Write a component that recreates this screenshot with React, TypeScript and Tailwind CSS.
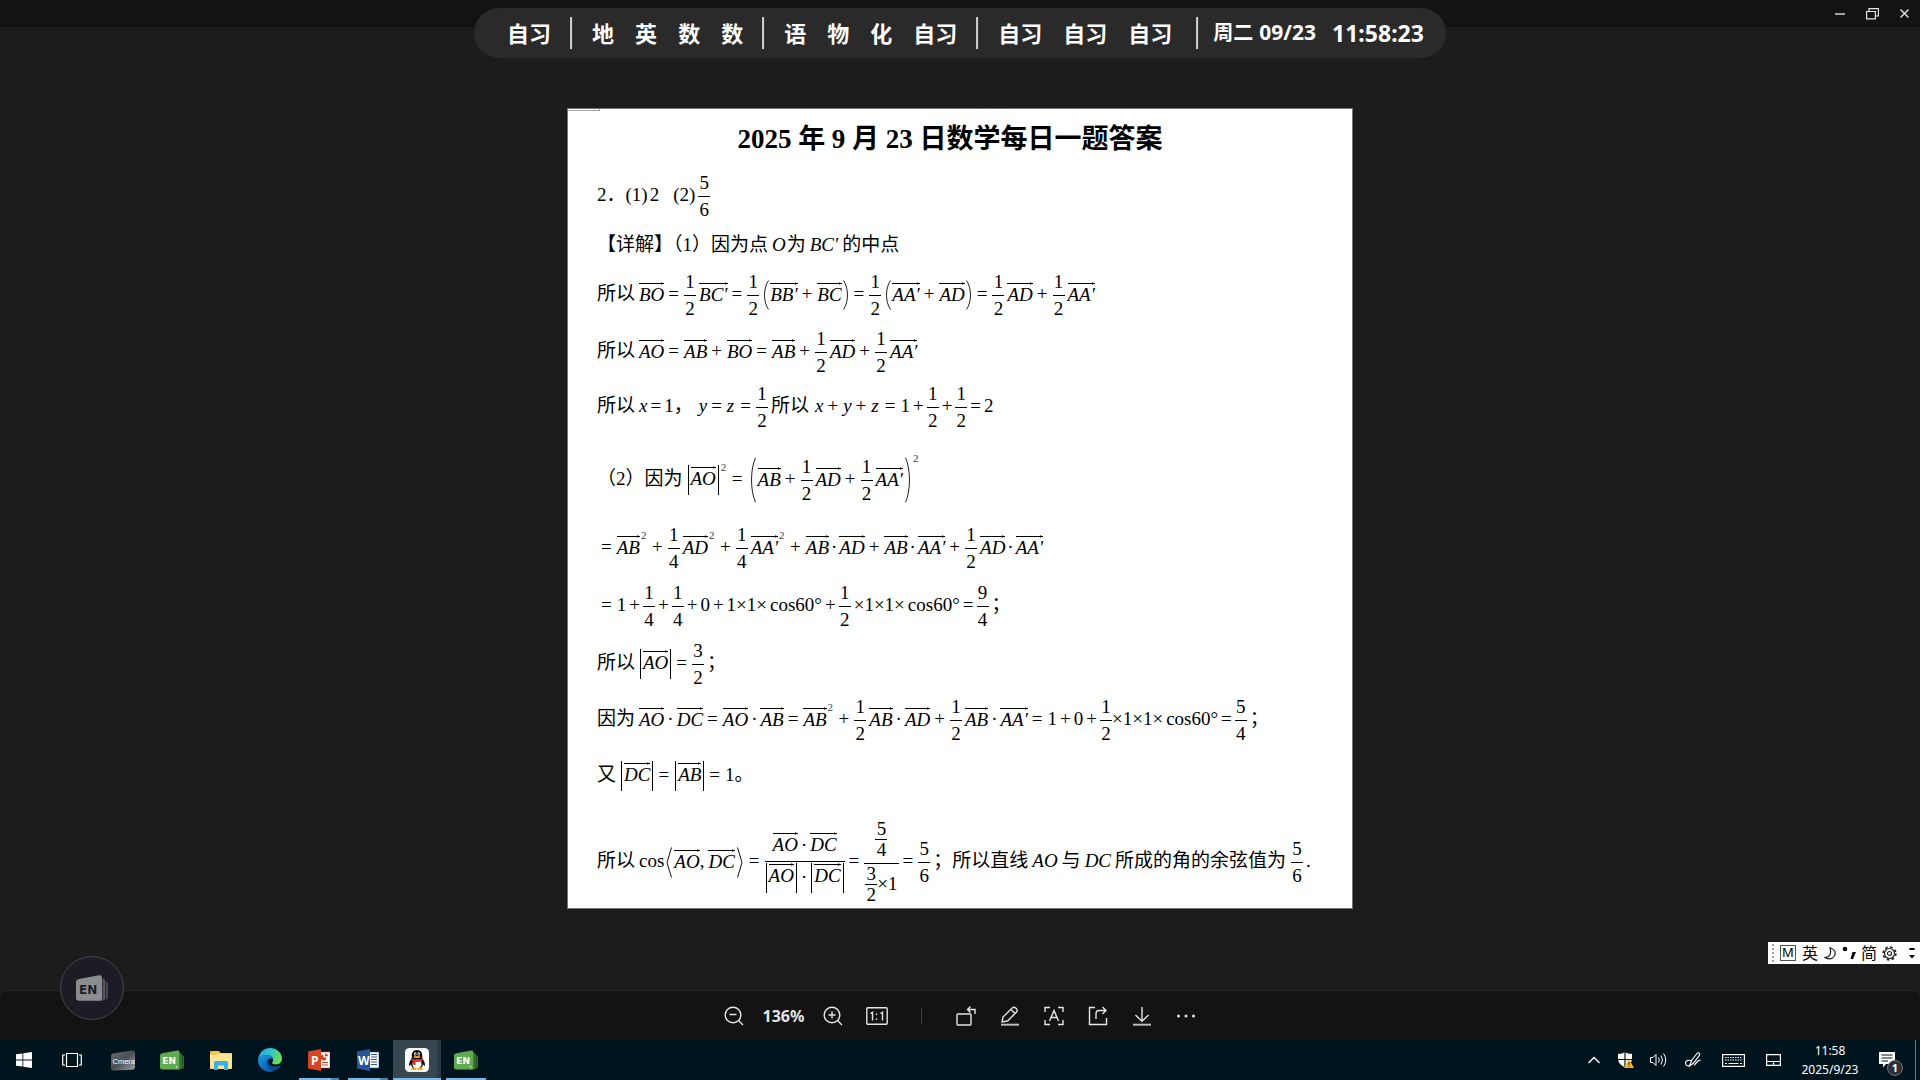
import React, { type ReactNode } from "react";

const SERIF = "font-['Liberation_Serif','Noto_Sans_CJK_SC',serif]";
const UI = "font-['Noto_Sans','Noto_Sans_CJK_SC',sans-serif]";

/* ---------- math building blocks ---------- */

function T({ children, className = "" }: { children: ReactNode; className?: string }) {
  return <span className={`whitespace-pre pb-[2px] leading-5 ${className}`}>{children}</span>;
}

function Vec({ children }: { children: string }) {
  return (
    <span className="relative mb-[3px] border-t border-black pt-px leading-5">
      <i>{children}</i>
      <svg className="absolute -top-[3px] right-0 h-[5px] w-[5px]" viewBox="0 0 5 5">
        <path d="M2 1.2 L5 2.5 L2 3.8 Z" fill="#000" />
      </svg>
    </span>
  );
}

function V({ children, className = "" }: { children: string; className?: string }) {
  return <i className={`pb-[2px] leading-5 ${className}`}>{children}</i>;
}

function Op({ children }: { children: string }) {
  return <span className="ml-1 mr-[5px] pb-[2px] leading-5">{children}</span>;
}

/* operator between plain numbers, set closer than between vectors */
function NOp({ children }: { children: string }) {
  return <span className="mx-[3px] pb-[2px] leading-5">{children}</span>;
}

function Frac({ n, d, nested = false, gap = true }: { n: string; d: string; nested?: boolean; gap?: boolean }) {
  return (
    <span className={`flex w-3 flex-col items-center leading-5 ${gap ? "mr-[3px]" : ""}`}>
      <span className={nested ? "" : "pb-[3px]"}>{n}</span>
      <span className="h-px w-full bg-black" />
      <span className={nested ? "" : "pt-[3px]"}>{d}</span>
    </span>
  );
}

function Dot({ className = "mx-[3px]" }: { className?: string }) {
  return <span className={`pb-[2px] leading-5 ${className}`}>·</span>;
}

function Sup() {
  return <span className="-mt-[26px] ml-px w-[7px] text-[11px] leading-3 text-neutral-700">2</span>;
}

function Abs({ children }: { children: ReactNode }) {
  return <span className="mx-px flex h-[30px] items-center border-x border-black px-[2px] pb-[2px]">{children}</span>;
}

function Paren({ side, tall = false }: { side: "l" | "r"; tall?: boolean }) {
  return (
    <svg
      className={`w-[6px] ${tall ? "mx-[2px] h-[46px]" : "mx-px h-[30px]"} ${side === "r" ? "-scale-x-100" : ""}`}
      viewBox="0 0 6 30"
      preserveAspectRatio="none"
      fill="none"
      stroke="#222"
    >
      <path d="M5.5 .5 C.2 8 .2 22 5.5 29.5" vectorEffect="non-scaling-stroke" />
    </svg>
  );
}

function Angle({ side }: { side: "l" | "r" }) {
  return (
    <svg className={`mx-[2px] h-[31px] w-[6px] ${side === "r" ? "-scale-x-100" : ""}`} viewBox="0 0 6 31" fill="none" stroke="#111">
      <path d="M5.5 .5 L1 15.5 L5.5 30.5" />
    </svg>
  );
}

function Row({ children, className = "h-14" }: { children: ReactNode; className?: string }) {
  return <div className={`flex items-center whitespace-nowrap ${className}`}>{children}</div>;
}

function Half({ gap = true }: { gap?: boolean }) {
  return <Frac n="1" d="2" gap={gap} />;
}

function Document() {
  return (
    <article
      lang="zh-CN"
      className={`relative w-[786px] border border-neutral-500 bg-white pl-[29px] text-[19px] text-black ${SERIF}`}
    >
      <span className="absolute left-0 top-0 h-[2px] w-8 border-b border-r border-neutral-400" />
      <h1 className="flex h-[60px] items-center justify-center pr-[49px] text-[27px] font-bold">
        2025 年 9 月 23 日数学每日一题答案
      </h1>
      <Row className="h-[54px]">
        <T>2．</T><T>(1)</T><T className="ml-[2px]">2</T><T className="ml-[14px] mr-[3px]">(2)</T><Frac n="5" d="6" />
      </Row>
      <Row className="h-[42px] pt-[3px]">
        <T>【详解】（1）因为点</T><V className="ml-1 mr-px">O</V><T>为</T>
        <V className="mx-1">BC′</V><T>的中点</T>
      </Row>
      <Row className="h-[60px]">
        <T className="mr-1">所以</T><Vec>BO</Vec><Op>=</Op><Half /><Vec>BC′</Vec><Op>=</Op><Half />
        <Paren side="l" /><Vec>BB′</Vec><Op>+</Op><Vec>BC</Vec><Paren side="r" /><Op>=</Op><Half />
        <Paren side="l" /><Vec>AA′</Vec><Op>+</Op><Vec>AD</Vec><Paren side="r" /><Op>=</Op><Half />
        <Vec>AD</Vec><Op>+</Op><Half /><Vec>AA′</Vec>
      </Row>
      <Row className="h-[54px]">
        <T className="mr-1">所以</T><Vec>AO</Vec><Op>=</Op><Vec>AB</Vec><Op>+</Op><Vec>BO</Vec><Op>=</Op>
        <Vec>AB</Vec><Op>+</Op><Half /><Vec>AD</Vec><Op>+</Op><Half /><Vec>AA′</Vec>
      </Row>
      <Row>
        <T className="mr-1">所以</T><V>x</V><NOp>=</NOp><T>1，</T><V className="ml-[6px]">y</V><Op>=</Op>
        <V className="mr-[2px]">z</V><Op>=</Op><Half /><T className="mr-[6px]">所以</T><V>x</V><Op>+</Op>
        <V>y</V><Op>+</Op><V className="mr-[2px]">z</V><Op>=</Op><T>1</T><NOp>+</NOp><Half gap={false} />
        <NOp>+</NOp><Half gap={false} /><NOp>=</NOp><T>2</T>
      </Row>
      <Row className="mt-[17px] h-14">
        <T className="mr-1">（2）因为</T><Abs><Vec>AO</Vec></Abs><Sup /><Op>=</Op><Paren side="l" tall />
        <Vec>AB</Vec><Op>+</Op><Half /><Vec>AD</Vec><Op>+</Op><Half /><Vec>AA′</Vec><Paren side="r" tall />
        <span className="-mt-[44px] text-[11px] leading-3 text-neutral-700">2</span>
      </Row>
      <Row className="mt-3 h-14">
        <Op>=</Op><Vec>AB</Vec><Sup /><Op>+</Op><Frac n="1" d="4" /><Vec>AD</Vec><Sup /><Op>+</Op>
        <Frac n="1" d="4" /><Vec>AA′</Vec><Sup /><Op>+</Op><Vec>AB</Vec><Dot className="mx-[2px]" />
        <Vec>AD</Vec><Op>+</Op><Vec>AB</Vec><Dot className="mx-[2px]" /><Vec>AA′</Vec><Op>+</Op><Half />
        <Vec>AD</Vec><Dot className="mx-[2px]" /><Vec>AA′</Vec>
      </Row>
      <Row className="h-[60px]">
        <Op>=</Op><T>1</T><NOp>+</NOp><Frac n="1" d="4" gap={false} /><NOp>+</NOp>
        <Frac n="1" d="4" gap={false} /><NOp>+</NOp><T>0</T><NOp>+</NOp><T>1×1×</T>
        <T className="ml-[3px]">cos60°</T><NOp>+</NOp><Half /><T>×1×1×</T>
        <T className="ml-[3px]">cos60°</T><NOp>=</NOp><Frac n="9" d="4" /><T>；</T>
      </Row>
      <Row>
        <T className="mr-1">所以</T><Abs><Vec>AO</Vec></Abs><Op>=</Op><Frac n="3" d="2" /><T>；</T>
      </Row>
      <Row>
        <T className="mr-1">因为</T><Vec>AO</Vec><Dot /><Vec>DC</Vec><Op>=</Op><Vec>AO</Vec><Dot /><Vec>AB</Vec>
        <Op>=</Op><Vec>AB</Vec><Sup /><Op>+</Op><Half /><Vec>AB</Vec><Dot /><Vec>AD</Vec><Op>+</Op><Half />
        <Vec>AB</Vec><Dot /><Vec>AA′</Vec><Op>=</Op><T>1</T><NOp>+</NOp><T>0</T><NOp>+</NOp>
        <Half gap={false} /><T>×1×1×</T><T className="ml-[3px]">cos60°</T><NOp>=</NOp><Frac n="5" d="4" /><T>；</T>
      </Row>
      <Row>
        <T className="mr-1">又</T><Abs><Vec>DC</Vec></Abs><Op>=</Op><Abs><Vec>AB</Vec></Abs><Op>=</Op><T>1。</T>
      </Row>
      <Row className="mt-3 h-[92px]">
        <T className="mr-1">所以</T><T>cos</T><Angle side="l" /><Vec>AO</Vec><T className="mr-1">,</T>
        <Vec>DC</Vec><Angle side="r" /><Op>=</Op>
        <span className="flex flex-col items-center">
          <span className="flex h-[30px] items-center"><Vec>AO</Vec><Dot /><Vec>DC</Vec></span>
          <span className="h-px w-full bg-black" />
          <span className="flex h-[32px] items-center">
            <Abs><Vec>AO</Vec></Abs><Dot /><Abs><Vec>DC</Vec></Abs>
          </span>
        </span>
        <Op>=</Op>
        <span className="flex flex-col items-center">
          <span className="pb-[3px]"><Frac n="5" d="4" nested gap={false} /></span>
          <span className="h-px w-full bg-black" />
          <span className="flex items-center px-px"><Frac n="3" d="2" nested gap={false} /><T>×1</T></span>
        </span>
        <Op>=</Op><Frac n="5" d="6" /><T>；所以直线</T><V className="mx-1">AO</V><T>与</T>
        <V className="mx-1">DC</V><T className="mr-[5px]">所成的角的余弦值为</T><Frac n="5" d="6" /><T>.</T>
      </Row>
    </article>
  );
}

/* ---------- schedule pill ---------- */

const schedule = [["自习"], ["地", "英", "数", "数"], ["语", "物", "化", "自习"], ["自习", "自习", "自习"]];

function SchedulePill() {
  return (
    <div
      lang="zh-CN"
      className={`absolute left-1/2 top-2 flex h-[50px] -translate-x-1/2 items-center whitespace-nowrap rounded-full bg-[#2a2a2a] pl-[33px] pr-[22px] text-[22px] font-bold text-white ${UI}`}
    >
      {schedule.map((group, i) => (
        <div key={i} className="flex items-center">
          <div className="flex gap-[21px]">
            {group.map((s, j) => (
              <span key={j}>{s}</span>
            ))}
          </div>
          <span className={i === 3 ? "ml-6 mr-[15px] h-8 w-[2px] bg-neutral-300" : "ml-[19px] mr-5 h-8 w-[2px] bg-neutral-300"} />
        </div>
      ))}
      <span className="text-[20px]">周二</span>
      <span className="ml-[6px] text-[21px]">09/23</span>
      <span className="ml-4 text-[23px]">11:58:23</span>
    </div>
  );
}

/* ---------- icons ---------- */

function Ico({ children, className = "h-5 w-5", box = "0 0 20 20" }: { children: ReactNode; className?: string; box?: string }) {
  return (
    <svg className={className} viewBox={box} fill="none" stroke="currentColor" strokeWidth="1.4" aria-hidden="true">
      {children}
    </svg>
  );
}

const zoomOut = (
  <Ico><circle cx="9" cy="9" r="7.8" /><path d="M14.5 14.5 L19 19 M5.5 8.5 H12.5" /></Ico>
);
const zoomIn = (
  <Ico><circle cx="9" cy="9" r="7.8" /><path d="M14.5 14.5 L19 19 M5.5 9 H12.5 M9 5.5 V12.5" /></Ico>
);

const tools: { label: string; icon: ReactNode }[] = [
  { label: "旋转", icon: <Ico><rect x="1" y="8" width="14" height="11" rx="1" /><path d="M19 8 V3.5 H11.5 M14.5 .5 L11.5 3.5 L14.5 6.5" /></Ico> },
  { label: "编辑", icon: <Ico><path d="M2 16 L3 11 L12.5 1.8 Q14 .6 16 2.2 Q18 4.2 16.8 5.8 L7.5 15 Z M11 3.5 L15 7.5" /><path d="M1 18.7 H19" strokeWidth="2" stroke="#bbb" /></Ico> },
  { label: "文字识别", icon: <Ico><path d="M1 6 V1.5 H6 M14 1.5 H19 V6 M19 14 V18.5 H14 M6 18.5 H1 V14 M5.5 15 L10 4.5 L14.5 15 M7 11.5 H13" /></Ico> },
  { label: "分享", icon: <Ico><path d="M7 1.5 H1.5 V18.5 H18.5 V12 M8 13 V8 Q8 4.5 11 4.5 H18 M14.5 1 L18 4.5 L14.5 8" /></Ico> },
  { label: "下载", icon: <Ico><path d="M10 1 V15 M3.5 9 L10 15.3 L16.5 9" /><path d="M1 18.7 H19" strokeWidth="2" stroke="#bbb" /></Ico> },
  { label: "更多", icon: <Ico><g fill="currentColor" stroke="none"><circle cx="2.5" cy="10" r="1.5" /><circle cx="10" cy="10" r="1.5" /><circle cx="17.5" cy="10" r="1.5" /></g></Ico> },
];

function ToolButton({ label, children }: { label: string; children: ReactNode }) {
  return (
    <button aria-label={label} className="flex h-8 w-11 items-center justify-center text-neutral-200">
      {children}
    </button>
  );
}

function Toolbar() {
  return (
    <div className={`flex h-[50px] items-center justify-center rounded-t-lg border-t border-[#222222] bg-[#131313] ${UI}`}>
      <ToolButton label="缩小">{zoomOut}</ToolButton>
      <span className="w-[55px] text-center text-[16px] font-bold text-neutral-200">136%</span>
      <ToolButton label="放大">{zoomIn}</ToolButton>
      <ToolButton label="原始大小">
        <Ico className="h-[18px] w-[22px]" box="0 0 22 18">
          <rect x=".8" y=".8" width="20.4" height="16.4" rx="1" />
          <path d="M4.5 6.5 L6.5 5.2 V13.5 M14.5 6.5 L16.5 5.2 V13.5" />
          <path d="M10.5 6.5 V8 M10.5 11.5 V13" />
        </Ico>
      </ToolButton>
      <span className="mx-[22px] h-4 w-px bg-neutral-700" />
      {tools.map((t) => (
        <ToolButton key={t.label} label={t.label}>{t.icon}</ToolButton>
      ))}
    </div>
  );
}

function CardsIcon({ tone, className }: { tone: "green" | "gray"; className: string }) {
  const c = tone === "green" ? ["#5fac50", "#3d8a35", "#2f6d2a", "#ffffff"] : ["#8c8c8e", "#5b5b5e", "#4a4a4d", "#1c1d24"];
  return (
    <svg className={className} viewBox="0 0 32 26" aria-hidden="true">
      <path d="M20 4.5 L30.500 6.5 Q32 7 32 9 V22 Q32 24 30 24.5 H20 Z" fill={c[2]} />
      <path d="M20 2 L27.5 3.5 Q29 4 29 6 V23 Q29 25 27 25.5 H20 Z" fill={c[1]} />
      <path d="M3 4 L23 .3 Q26 0 26 2.5 V23 Q26 25.7 23.5 25.7 H3 Q0 25.7 0 23 V7 Q0 4.500 3 4 Z" fill={c[0]} />
      <path d="M26.700 1.500 V25 M29.600 5 V24.500" stroke="#101820" strokeWidth=".6" />
      <text x="3" y="18.5" fontSize="12" fontWeight="700" fontFamily="DejaVu Sans, sans-serif" fill={c[3]}>EN</text>
      {tone === "green" && <circle cx="22" cy="22" r="1" fill="#fff" />}
    </svg>
  );
}

function CameraIcon() {
  return (
    <svg className="h-[21px] w-6" viewBox="0 0 24 21" aria-hidden="true">
      <defs>
        <linearGradient id="cam" x1="0" y1="0" x2="1" y2="1">
          <stop offset="0" stopColor="#6a6f73" /><stop offset=".5" stopColor="#4a4f53" /><stop offset="1" stopColor="#9fa3a6" />
        </linearGradient>
      </defs>
      <path d="M2 3.5 L21 .5 Q24 0 24 3 V17 Q24 19.5 21 19.8 L3 20.5 Q0 20.7 0 18 V6 Q0 4 2 3.5 Z" fill="url(#cam)" />
      <text x="1.5" y="14" fontSize="7.500" fontFamily="Liberation Sans, sans-serif" fill="#fff">Cmera</text>
    </svg>
  );
}

function FolderIcon() {
  return (
    <svg className="h-[19px] w-[22px]" viewBox="0 0 22 19" aria-hidden="true">
      <path d="M0 1 Q0 0 1 0 H9 L10.5 2 H21 Q22 2 22 3 V17 H0 Z" fill="#f3c64b" />
      <path d="M0 4 L9 3.500 L10.500 2.500 H22 V17 Q22 18 21 18 H1 Q0 18 0 17 Z" fill="#fde594" />
      <path d="M4 19 V11.5 Q4 10 5.5 10 H16.5 Q18 10 18 11.5 V19 H14 V14.5 H8 V19 Z" fill="#38b0e8" />
    </svg>
  );
}

function EdgeIcon() {
  return (
    <svg className="h-6 w-6" viewBox="0 0 24 24" aria-hidden="true">
      <defs>
        <linearGradient id="e1" x1="0" y1="0" x2="1" y2=".4">
          <stop offset="0" stopColor="#1f9fe0" /><stop offset=".5" stopColor="#2fc3cf" /><stop offset="1" stopColor="#66dd5a" />
        </linearGradient>
        <linearGradient id="e2" x1="0" y1="0" x2=".6" y2="1">
          <stop offset="0" stopColor="#1c9ae4" /><stop offset="1" stopColor="#0a59b0" />
        </linearGradient>
      </defs>
      <path d="M.2 11 C1 4.5 6 0 12 0 C19 0 24 5 24 10.8 C24 14.5 21 16.5 18 16.5 C15.5 16.5 14 15.6 14 15 C14 14.4 15.2 13.8 15.2 11.8 C15.2 9.5 13 7 9 7 C4.5 7 1.5 9 .2 11 Z" fill="url(#e1)" />
      <path d="M0 12 C.5 9 4 6.8 8.5 6.8 C12.5 6.8 14.8 9 15.2 11 C14 9.8 9 10.5 9 15 C9 19.5 13.5 22 17 21.8 C15.5 23.2 13.5 24 12 24 C5 24 -.3 18.5 0 12 Z" fill="url(#e2)" />
      <path d="M8.5 14.5 C8.5 12.5 9.3 11.3 10.5 10.5 C9.7 13.5 11 18.6 17 18.6 C20 18.6 21.8 17.3 22.5 17.5 C22.8 17.6 22.7 18 22.5 18.3 C21 20.5 19 22 17 22.3 C12.5 23 8.5 19.5 8.5 14.5 Z" fill="#114a8b" />
    </svg>
  );
}

function OfficeIcon({ kind }: { kind: "P" | "W" }) {
  const color = kind === "P" ? "#d24625" : "#2a5699";
  return (
    <svg className="h-[22px] w-[22px]" viewBox="0 0 22 22" aria-hidden="true">
      <rect x="11" y="3" width="11" height="16" fill="#fff" stroke={color} strokeWidth=".6" />
      {kind === "P" ? (
        <>
          <path d="M15.5 5.5 A3 3 0 1 0 18.5 8.5 H15.5 Z" fill={color} />
          <path d="M17 4.5 A3 3 0 0 1 20 7.2 H17 Z" fill={color} />
          <path d="M14 13.5 H20 M14 16 H20" stroke={color} />
        </>
      ) : (
        <path d="M14 5.5 H20 M14 8 H20 M14 10.5 H20 M14 13 H20 M14 15.5 H20" stroke={color} />
      )}
      <path d="M0 2.5 L13 0 V22 L0 19.5 Z" fill={color} />
      <text x={kind === "P" ? 3 : 1} y="15.5" fontSize="12" fontWeight="700" fontFamily="Noto Sans, sans-serif" fill="#fff">{kind}</text>
    </svg>
  );
}

function QQIcon() {
  return (
    <svg className="h-6 w-6" viewBox="0 0 24 24" aria-hidden="true">
      <rect width="24" height="24" rx="4.5" fill="#fff" />
      <path d="M12 2 C8.2 2 6.8 4.8 6.8 7.5 V10 C5.5 12 3.8 14.5 4 17.5 C4.3 18.3 5.5 17 6 16.2 C6.3 18 7 19.2 8 20 H16 C17 19.2 17.7 18 18 16.2 C18.5 17 19.7 18.3 20 17.5 C20.2 14.5 18.5 12 17.2 10 V7.5 C17.2 4.8 15.8 2 12 2 Z" fill="#0a0a0a" />
      <ellipse cx="12" cy="16" rx="4.6" ry="4.6" fill="#fff" />
      <ellipse cx="10.3" cy="6" rx="1.2" ry="1.7" fill="#fff" /><ellipse cx="13.7" cy="6" rx="1.2" ry="1.7" fill="#fff" />
      <circle cx="10.6" cy="6.2" r=".6" fill="#000" /><circle cx="13.4" cy="6.2" r=".6" fill="#000" />
      <ellipse cx="12" cy="9" rx="3.6" ry="1.1" fill="#f7a51c" />
      <path d="M6.3 10.3 Q12 13.2 17.7 10.3 L18 12.3 Q14 14.3 10.5 13.8 V17 L8 16.7 V13.3 L6 12.3 Z" fill="#e8262a" />
      <ellipse cx="8.8" cy="20.8" rx="3" ry="1.3" fill="#f7a51c" /><ellipse cx="15.2" cy="20.8" rx="3" ry="1.3" fill="#f7a51c" />
    </svg>
  );
}

const apps: { label: string; icon: ReactNode; state?: "open" | "active" | "stack" }[] = [
  { label: "Camera", icon: <CameraIcon /> },
  { label: "EN", icon: <CardsIcon tone="green" className="h-5 w-6" /> },
  { label: "文件资源管理器", icon: <FolderIcon /> },
  { label: "Edge", icon: <EdgeIcon /> },
  { label: "PowerPoint", icon: <OfficeIcon kind="P" />, state: "stack" },
  { label: "Word", icon: <OfficeIcon kind="W" />, state: "stack" },
  { label: "QQ", icon: <QQIcon />, state: "active" },
  { label: "EN 窗口", icon: <CardsIcon tone="green" className="h-5 w-6" />, state: "open" },
];

function Taskbar() {
  return (
    <footer className={`flex h-10 items-stretch bg-[#00141e] text-white ${UI}`}>
      <button aria-label="开始" className="flex w-12 items-center justify-center">
        <svg className="h-4 w-4" viewBox="0 0 16 16" fill="#fff">
          <path d="M0 2.3 L6.5 1.4 V7.6 H0 Z M7.3 1.2 L16 0 V7.6 H7.3 Z M0 8.4 H6.5 V14.6 L0 13.7 Z M7.3 8.4 H16 V16 L7.3 14.8 Z" />
        </svg>
      </button>
      <button aria-label="任务视图" className="mr-[3px] flex w-12 items-center justify-center">
        <Ico className="h-4 w-5" box="0 0 20 16">
          <path d="M4.5 1.5 H15.5 V14.5 H4.5 Z M3 3 H.7 V13 H3 M17 3 H19.3 V13 H17" strokeWidth="1.2" />
        </Ico>
      </button>
      <div className="flex gap-px">
        {apps.map((a) => (
          <button
            key={a.label}
            aria-label={a.label}
            className={`relative flex w-12 items-center justify-center ${a.state === "active" ? "border-r-4 border-[#2a3a44] bg-[#37474f]" : ""}`}
          >
            <span className={a.state === "active" ? "ml-1" : ""}>{a.icon}</span>
            {a.state === "open" && <span className="absolute bottom-0 left-1 right-1 h-[2px] bg-[#76b9ed]" />}
            {a.state === "stack" && <span className="absolute bottom-0 left-1 right-1 h-[2px] border-r-8 border-[#4f86ae] bg-[#76b9ed]" />}
            {a.state === "active" && <span className="absolute -right-1 bottom-0 left-0 h-[2px] bg-[#76b9ed]" />}
          </button>
        ))}
      </div>
      <div className="ml-auto flex items-center">
        <button aria-label="显示隐藏的图标" className="flex w-[33px] justify-center">
          <Ico className="h-2 w-3" box="0 0 12 8"><path d="M.5 7 L6 1.5 L11.5 7" /></Ico>
        </button>
        <button aria-label="安全中心" className="flex w-8 justify-center">
          <svg className="h-4 w-4" viewBox="0 0 16 16">
            <path d="M7 .3 Q9.5 1.8 14 2 V7 Q13.5 12.5 7 15.5 Q.5 12.5 0 7 V2 Q4.5 1.8 7 .3 Z" fill="#fff" />
            <path d="M7 0 V16 M0 7.5 H14" stroke="#00141e" strokeWidth="1.2" />
            <path d="M11 7 L16 16 H6 Z" fill="#fdb813" />
            <path d="M11 10 V13 M11 14 V15" stroke="#222" />
          </svg>
        </button>
        <button aria-label="音量" className="flex w-8 justify-center">
          <Ico className="h-4 w-[17px]" box="0 0 17 16">
            <path d="M.6 5.5 H3 L6 2.5 V13.5 L3 10.5 H.6 Z M8.5 5.5 Q10.2 8 8.5 10.5 M11 3.5 Q14 8 11 12.5 M13.5 1.5 Q18 8 13.5 14.5" strokeWidth="1" />
          </Ico>
        </button>
        <button aria-label="Windows Ink" className="flex w-[38px] justify-center">
          <Ico className="h-4 w-4" box="0 0 16 16">
            <path d="M4.5 14 L6.5 8.5 L12 1.5 Q13.5 0 14.5 1.5 Q15 2.5 14 3.8 L8.5 11 Z M6.5 8.5 Q0 7.5 .6 11.5 Q1 14.5 4.5 13.5 Q7 12.5 8.5 11 M9 13.5 Q11 11 12.5 9.5 Q14.5 7.5 15.5 8.5" strokeWidth="1.1" />
          </Ico>
        </button>
        <button aria-label="触摸键盘" className="flex w-[43px] justify-center">
          <Ico className="h-[13px] w-[23px]" box="0 0 23 13">
            <rect x=".6" y=".6" width="21.8" height="11.8" strokeWidth="1.2" />
            <path d="M3 3.5 H20 M3 6 H20" strokeDasharray="1.5 1" strokeWidth="1.2" />
            <path d="M3 9.5 H5 M6.5 9.5 H16.5 M18 9.5 H20" strokeWidth="1.2" />
          </Ico>
        </button>
        <button aria-label="虚拟触摸板" className="flex w-[37px] justify-center">
          <Ico className="h-3 w-[15px]" box="0 0 15 12"><path d="M.6 .6 H14.4 V11.4 H.6 Z M.6 7.5 H14.4 M7.5 7.5 V11.4" strokeWidth="1.2" /></Ico>
        </button>
        <button className="w-[76px] text-center text-[12px] leading-[19px]">
          <span className="block">11:58</span>
          <span className="block">2025/9/23</span>
        </button>
        <button aria-label="通知" className="relative flex h-10 w-[47px] items-center pl-[11px]">
          <svg className="h-4 w-4" viewBox="0 0 16 16">
            <path d="M0 0 H16 V12 H7 L4 15.5 V12 H0 Z" fill="#fff" />
            <path d="M2.5 3 H13.5 M2.5 6 H13.5 M2.5 9 H9" stroke="#00141e" strokeWidth="1.2" />
          </svg>
          <span className="absolute bottom-1 right-3 flex h-4 w-4 items-center justify-center rounded-full border border-neutral-500 bg-[#2b3036] text-[11px] font-bold">
            1
          </span>
        </button>
        <span className="mr-1 h-10 w-px bg-neutral-500" />
      </div>
    </footer>
  );
}

function ImeBar() {
  return (
    <div
      lang="zh-CN"
      className={`absolute bottom-[116px] right-0 flex h-[22px] w-[152px] items-center bg-white text-black ${UI}`}
    >
      <span className="ml-1 mr-[6px] h-[18px] border-l-2 border-dotted border-neutral-400" />
      <span className="flex h-4 w-4 items-center justify-center border border-neutral-600 text-[13px]">M</span>
      <span className="ml-[6px] text-[16px] leading-5">英</span>
      <svg className="ml-[6px] h-[13px] w-3" viewBox="0 0 12 13" fill="none" stroke="#222" strokeWidth="1.2">
        <path d="M6 .7 Q13 3 10.5 9 Q7 14 .8 10.5 Q8.500 10 6 .7 Z" />
      </svg>
      <svg className="ml-[6px] h-[14px] w-[15px]" viewBox="0 0 15 14">
        <circle cx="3" cy="3" r="2.3" /><path d="M10.5 6 H14 L11 13 H8.5 Z" />
      </svg>
      <span className="ml-1 text-[16px] leading-5">简</span>
      <svg className="ml-[5px] h-[15px] w-[15px]" viewBox="0 0 15 15" fill="none" stroke="#222" strokeWidth="1.2">
        <circle cx="7.5" cy="7.5" r="2" /><circle cx="7.5" cy="7.5" r="5" /><circle cx="7.5" cy="7.5" r="6.4" strokeDasharray="2.5 2.52" strokeWidth="1.6" />
      </svg>
      <svg className="ml-auto mr-[5px] h-3 w-[6px]" viewBox="0 0 6 12">
        <path d="M.5 2 H5.5" stroke="#000" strokeWidth="2" /><path d="M0 8 H6 L3 11.5 Z" />
      </svg>
    </div>
  );
}

export default function App() {
  return (
    <div className="relative flex min-h-screen flex-col overflow-hidden bg-[#1c1c1c]">
      <header className="flex h-7 items-center justify-end border-b border-[#1f1f1f] bg-[#131313] text-neutral-200">
        <button aria-label="最小化" className="flex h-6 w-8 items-center justify-center">
          <span className="h-[2px] w-[10px] bg-neutral-400" />
        </button>
        <button aria-label="还原" className="flex h-6 w-8 items-center justify-center">
          <Ico className="h-3 w-[13px]" box="0 0 13 12"><path d="M.6 3.5 H9.4 V10.9 H.6 Z M3 3.5 V.6 H12.4 V8 H9.4" strokeWidth="1.2" /></Ico>
        </button>
        <button aria-label="关闭" className="flex h-6 w-8 items-center justify-center">
          <Ico className="h-[9px] w-[9px]" box="0 0 9 9"><path d="M.5 .5 L8.5 8.5 M8.5 .5 L.5 8.5" /></Ico>
        </button>
      </header>
      <SchedulePill />
      <main className="flex flex-1 items-center justify-center pb-px">
        <Document />
      </main>
      <Toolbar />
      <Taskbar />
      <ImeBar />
      <button
        aria-label="EN"
        className="absolute bottom-[60px] left-[60px] flex h-16 w-16 items-center justify-center rounded-full border border-[#46464a] bg-[#1c1d24]"
      >
        <CardsIcon tone="gray" className="h-[26px] w-8" />
      </button>
    </div>
  );
}
